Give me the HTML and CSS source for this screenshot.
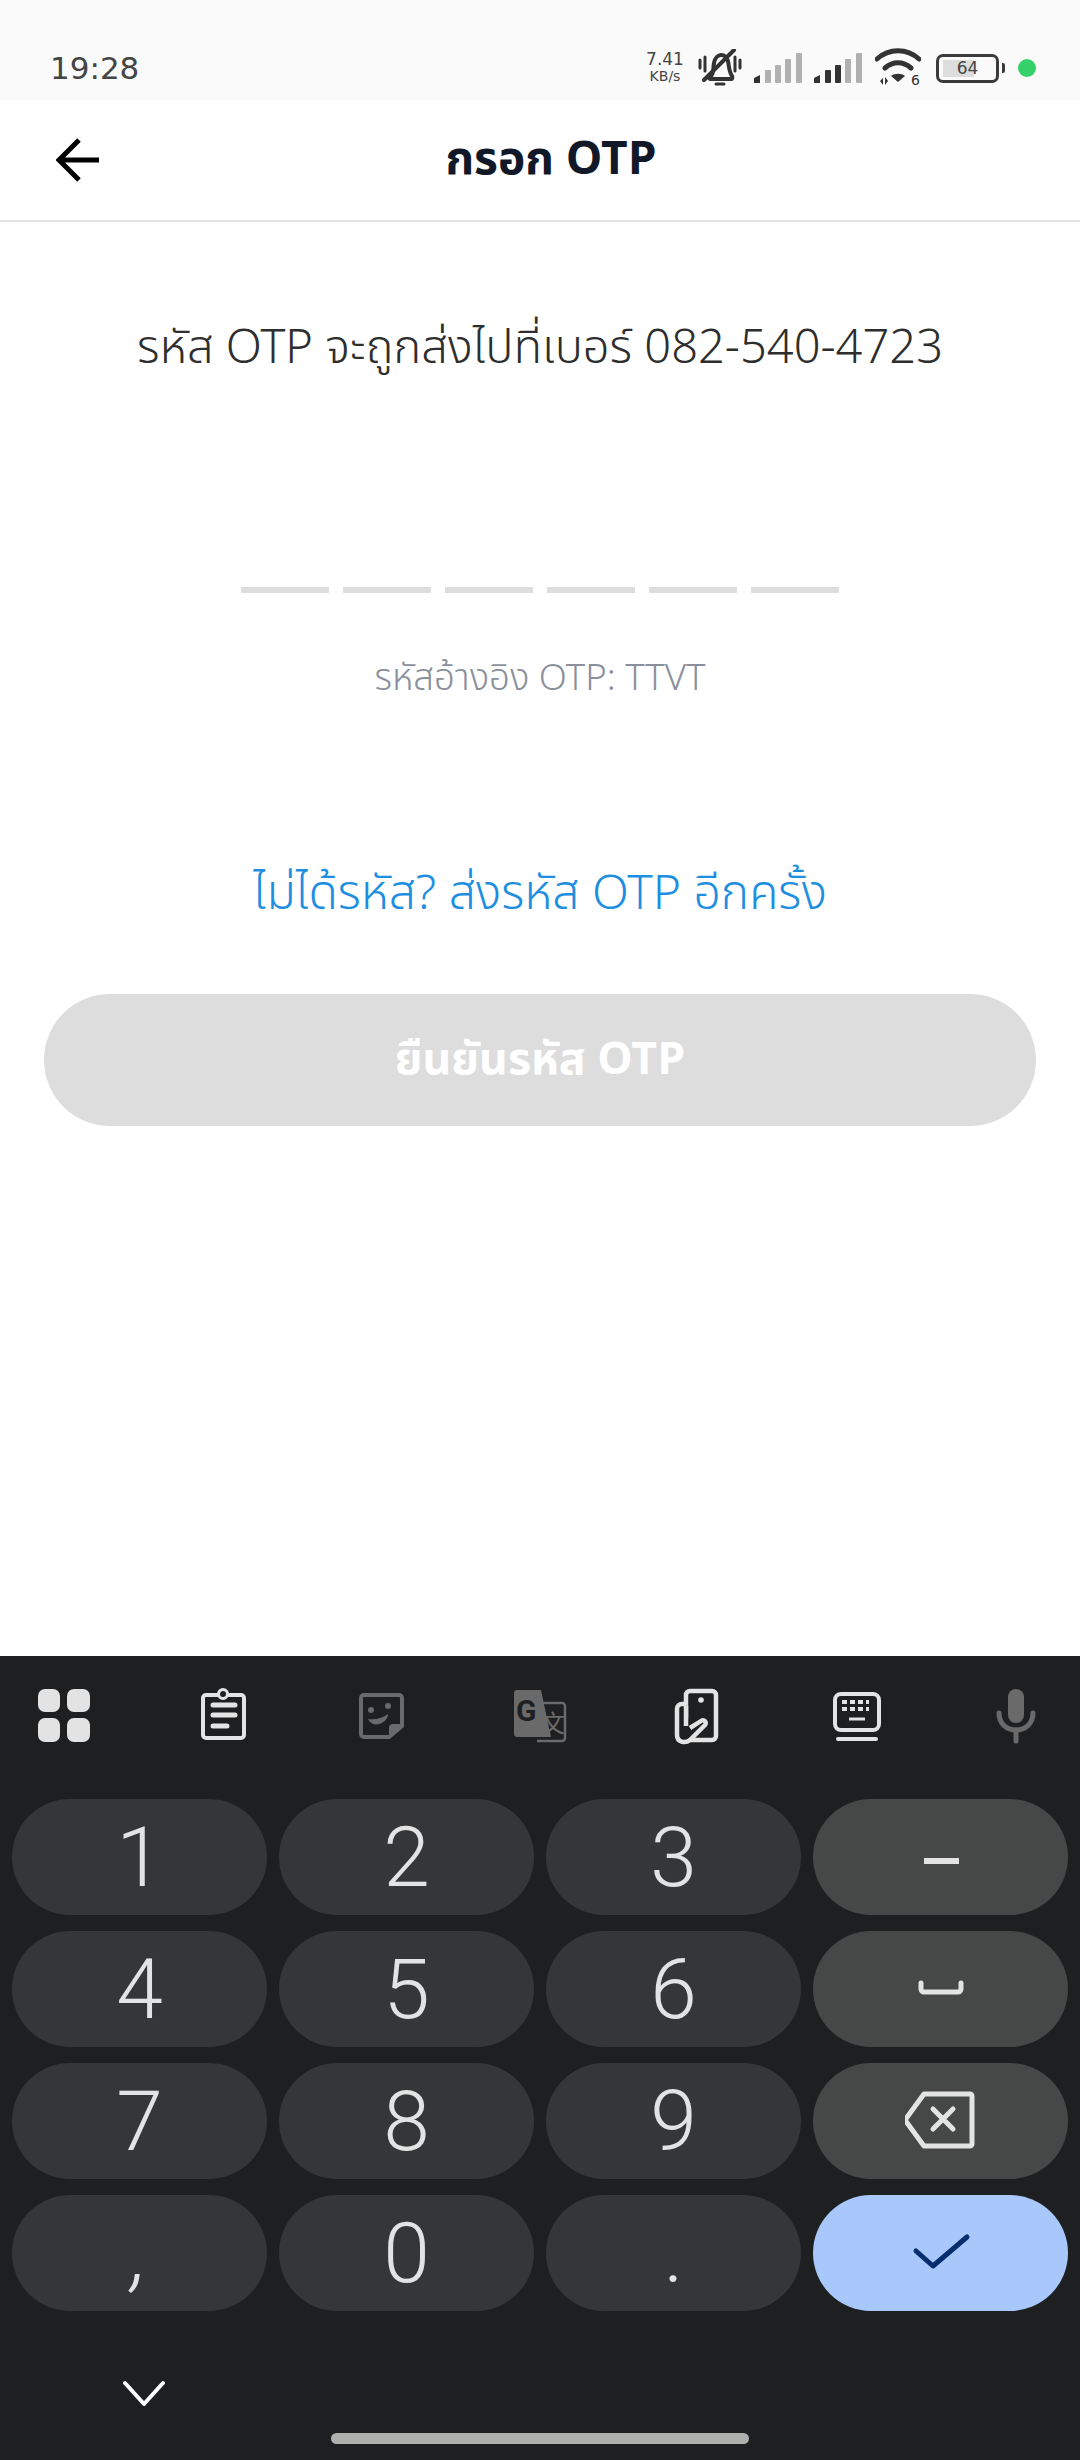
FILE: index.html
```html
<!DOCTYPE html>
<html lang="th">

<head>
  <meta charset="UTF-8">
  <title>กรอก OTP</title>
  <link rel="stylesheet" href="styles.css">
</head>

<body>
  <div class="phone">
    <div class="status-bar">
      <span class="time">19:28</span>
      <div class="status-icons">
        <div class="speed"><span>7.41</span><span class="speed-unit">KB/s</span></div>
        <svg class="st-bell" width="44" height="38" viewBox="0 0 44 38">
          <path d="M13 27c3-3 2-8 3-13 1-5 4-8 7-8s6 2 7 6c1 5 1 11 4 15 1 2 0 3-1 3H12c-1 0-1-2 1-3z" fill="none" stroke="#333" stroke-width="4"/>
          <path d="M18 35h8" stroke="#333" stroke-width="3" stroke-linecap="round"/>
          <path d="M6 31L36 1" stroke="#333" stroke-width="4" stroke-linecap="round"/>
          <path d="M2 11v8M7 8v14M37 8v14M42 11v8" stroke="#333" stroke-width="3" stroke-linecap="round"/>
        </svg>
        <svg class="st-signal" width="48" height="30" viewBox="0 0 48 30">
          <path d="M0 30v-5l6-3v8z" fill="#333"/>
          <rect x="11" y="17" width="6" height="13" rx="1" fill="#b0b0b0"/>
          <rect x="21" y="12" width="6" height="18" rx="1" fill="#b0b0b0"/>
          <rect x="31" y="6" width="6" height="24" rx="1" fill="#b0b0b0"/>
          <rect x="42" y="0" width="6" height="30" rx="1" fill="#b0b0b0"/>
        </svg>
        <svg class="st-signal" width="48" height="30" viewBox="0 0 48 30">
          <path d="M0 30v-5l6-3v8z" fill="#333"/>
          <rect x="11" y="17" width="6" height="13" rx="1" fill="#333"/>
          <rect x="21" y="12" width="6" height="18" rx="1" fill="#333"/>
          <rect x="31" y="6" width="6" height="24" rx="1" fill="#b0b0b0"/>
          <rect x="42" y="0" width="6" height="30" rx="1" fill="#b0b0b0"/>
        </svg>
        <svg class="st-wifi" width="46" height="46" viewBox="0 0 46 46">
          <path d="M2 14C14 3 32 3 44 14M10 23c8-7 18-7 26 0" fill="none" stroke="#333" stroke-width="5" stroke-linecap="round"/>
          <path d="M16 31c4-3 10-3 14 0l-7 6z" fill="#333"/>
          <path d="M5 36l3-3v7zM10 32l3 4-3 4z" fill="#333"/>
          <text class="wifi-six" x="36" y="40">6</text>
        </svg>
        <div class="battery">
          <div class="battery-body"><span class="battery-level"></span><span class="battery-text">64</span></div>
          <span class="battery-cap"></span>
        </div>
        <span class="dot"></span>
      </div>
    </div>

    <header class="app-bar">
      <svg class="back" width="44" height="46" viewBox="0 0 44 46">
        <path d="M43 23H3M23 3L3 23l20 20" fill="none" stroke="#000" stroke-width="5"/>
      </svg>
      <h1 class="title">กรอก OTP</h1>
    </header>

    <main class="content">
      <p class="sent-to">รหัส OTP จะถูกส่งไปที่เบอร์ 082-540-4723</p>
      <div class="otp-row">
        <span></span><span></span><span></span><span></span><span></span><span></span>
      </div>
      <p class="ref">รหัสอ้างอิง OTP: TTVT</p>
      <a class="resend">ไม่ได้รหัส? ส่งรหัส OTP อีกครั้ง</a>
      <button class="confirm">ยืนยันรหัส OTP</button>
    </main>

    <section class="keyboard">
      <div class="kb-tools">
        <svg class="tool" viewBox="0 0 60 60">
          <rect x="4" y="3" width="22" height="23" rx="7" fill="#e3e3e3"/>
          <rect x="33" y="3" width="23" height="23" rx="7" fill="#e3e3e3"/>
          <rect x="4" y="32" width="22" height="24" rx="7" fill="#e3e3e3"/>
          <rect x="33" y="32" width="23" height="24" rx="7" fill="#e3e3e3"/>
        </svg>
        <svg class="tool" viewBox="0 0 60 60">
          <rect x="10" y="9" width="41" height="43" rx="3" fill="none" stroke="#e3e3e3" stroke-width="4"/>
          <circle cx="30" cy="8" r="4.5" fill="#1e1f21" stroke="#e3e3e3" stroke-width="3"/>
          <path d="M20 19h22M20 29h22M20 40h14" stroke="#e3e3e3" stroke-width="5" stroke-linecap="round"/>
        </svg>
        <svg class="tool" viewBox="0 0 60 60">
          <path d="M13 9h35a3 3 0 0 1 3 3v28L38 51H13a3 3 0 0 1-3-3V12a3 3 0 0 1 3-3z" fill="none" stroke="#6a6a6a" stroke-width="4"/>
          <path d="M51 38H42a4 4 0 0 0-4 4v9z" fill="#6a6a6a"/>
          <circle cx="20" cy="24" r="3" fill="#6a6a6a"/>
          <circle cx="37" cy="20" r="3" fill="#6a6a6a"/>
          <path d="M17 33c8 1 15-1 20-5 0 7-9 12-15 10-2-1-4-3-5-5z" fill="#6a6a6a"/>
        </svg>
        <svg class="tool" viewBox="0 0 60 60">
          <path d="M32 17h20a3 3 0 0 1 3 3v32a3 3 0 0 1-3 3H27" fill="none" stroke="#6a6a6a" stroke-width="2.5"/>
          <path d="M7 4h24l10 47H7a3 3 0 0 1-3-3V7a3 3 0 0 1 3-3z" fill="#6a6a6a"/>
          <text class="tr-g" x="6" y="35">G</text>
          <text class="tr-zh" x="31" y="46">文</text>
        </svg>
        <svg class="tool" viewBox="0 0 60 60">
          <path d="M17 34V9a4 4 0 0 1 4-4h22a4 4 0 0 1 4 4v41a4 4 0 0 1-4 4H21" fill="none" stroke="#e3e3e3" stroke-width="4.5"/>
          <circle cx="32" cy="14" r="2.8" fill="#e3e3e3"/>
          <path d="M17 18h-4a5 5 0 0 0-5 5v26c0 7 8 9 13 5l15-15c2-3-1-6-4-4l-11 7" fill="#1e1f21" stroke="#e3e3e3" stroke-width="4.5" stroke-linejoin="round"/>
          <path d="M17 20v20" stroke="#e3e3e3" stroke-width="4.5"/>
        </svg>
        <svg class="tool" viewBox="0 0 60 60">
          <rect x="8" y="8" width="44" height="36" rx="6" fill="none" stroke="#e3e3e3" stroke-width="4"/>
          <path d="M15 16h27M15 23h27" stroke="#e3e3e3" stroke-width="4" stroke-dasharray="5 3" fill="none"/>
          <path d="M22 33h16" stroke="#e3e3e3" stroke-width="3"/>
          <path d="M11 53h38" stroke="#e3e3e3" stroke-width="4" stroke-linecap="round"/>
        </svg>
        <svg class="tool" viewBox="0 0 60 60">
          <rect x="22" y="3" width="16" height="34" rx="8" fill="#6a6a6a"/>
          <path d="M13 27c0 11 8 17 17 17s17-6 17-17" fill="none" stroke="#6a6a6a" stroke-width="5" stroke-linecap="round"/>
          <path d="M30 44v11" stroke="#6a6a6a" stroke-width="5" stroke-linecap="round"/>
        </svg>
      </div>

      <div class="kb-keys">
        <div class="key">1</div>
        <div class="key">2</div>
        <div class="key">3</div>
        <div class="key key-fn">
          <svg width="60" height="60" viewBox="0 0 60 60"><path d="M13 34h35" stroke="#e3e3e3" stroke-width="6"/></svg>
        </div>
        <div class="key">4</div>
        <div class="key">5</div>
        <div class="key">6</div>
        <div class="key key-fn">
          <svg width="60" height="60" viewBox="0 0 60 60"><path d="M10 24v6a3 3 0 0 0 3 3h34a3 3 0 0 0 3-3v-6" fill="none" stroke="#e3e3e3" stroke-width="5" stroke-linecap="round"/></svg>
        </div>
        <div class="key">7</div>
        <div class="key">8</div>
        <div class="key">9</div>
        <div class="key key-fn">
          <svg width="72" height="60" viewBox="0 0 72 60">
            <path d="M19 3h46a2 2 0 0 1 2 2v48a2 2 0 0 1-2 2H19L0 29z" fill="none" stroke="#e3e3e3" stroke-width="5" stroke-linejoin="round"/>
            <path d="M28 18l20 20M48 18L28 38" stroke="#e3e3e3" stroke-width="5" stroke-linecap="round"/>
          </svg>
        </div>
        <div class="key key-comma">,</div>
        <div class="key">0</div>
        <div class="key">.</div>
        <div class="key key-enter">
          <svg width="60" height="44" viewBox="0 0 60 44"><path d="M5 20l17 15L56 6" fill="none" stroke="#062e6f" stroke-width="5" stroke-linecap="round" stroke-linejoin="round"/></svg>
        </div>
      </div>

      <div class="kb-bottom">
        <svg class="hide-kb" width="44" height="28" viewBox="0 0 44 28"><path d="M3 3l19 21L41 3" fill="none" stroke="#fff" stroke-width="4" stroke-linecap="round" stroke-linejoin="round"/></svg>
        <span class="home-bar"></span>
      </div>
    </section>
  </div>
</body>

</html>
```

FILE: styles.css
```css
* {
  box-sizing: border-box;
}

body {
  margin: 0;
  background: #fff;
  font-family: "Noto Sans Thai", "Noto Sans", "Liberation Sans", sans-serif;
}

.phone {
  width: 1080px;
  height: 2460px;
  display: flex;
  flex-direction: column;
  overflow: hidden;
}

/* status bar */

.status-bar {
  height: 100px;
  flex: none;
  background: #fafafa;
  display: flex;
  align-items: flex-end;
  justify-content: space-between;
  padding: 0 44px 14px 50px;
}

.time {
  font-family: "DejaVu Sans", sans-serif;
  font-size: 31px;
  line-height: 36px;
  color: #444;
}

.status-icons {
  display: flex;
  align-items: center;
  margin-bottom: -5px;
}

.speed {
  display: flex;
  flex-direction: column;
  align-items: center;
  width: 42px;
  font-family: "DejaVu Sans", sans-serif;
  font-size: 17px;
  line-height: 17px;
  color: #444;
  margin-right: 12px;
}

.speed-unit {
  font-size: 14px;
}

.st-signal {
  margin-left: 12px;
}

.st-signal:first-of-type {
  margin-left: 14px;
}

.st-wifi {
  margin-left: 13px;
}

.wifi-six {
  font-family: "DejaVu Sans", sans-serif;
  font-size: 14px;
  fill: #333;
}

.battery {
  display: flex;
  align-items: center;
  margin-left: 15px;
}

.battery-body {
  width: 63px;
  height: 29px;
  border: 3px solid #3a3a3a;
  border-radius: 7px;
  display: flex;
  align-items: center;
  justify-content: center;
  position: relative;
}

.battery-level {
  position: absolute;
  left: 4px;
  top: 3px;
  bottom: 3px;
  width: 31px;
  background: #ddd;
}

.battery-text {
  position: relative;
  font-family: "DejaVu Sans", sans-serif;
  font-size: 17px;
  color: #444;
}

.battery-cap {
  width: 3px;
  height: 10px;
  margin-left: 3px;
  background: #3a3a3a;
  border-radius: 0 2px 2px 0;
}

.dot {
  width: 18px;
  height: 18px;
  margin-left: 13px;
  border-radius: 50%;
  background: #34d168;
}

/* header */

.app-bar {
  height: 122px;
  flex: none;
  border-bottom: 2px solid #e2e2e2;
  display: flex;
  align-items: center;
  justify-content: center;
  position: relative;
}

.back {
  position: absolute;
  left: 56px;
  top: 37px;
}

.title {
  margin: 0 0 0 22px;
  font-size: 46px;
  font-weight: 700;
  color: #111827;
}

/* otp form */

.content {
  flex: 1;
  display: flex;
  flex-direction: column;
  align-items: center;
  padding: 0 44px;
}

.sent-to {
  margin: 95px 0 0;
  font-size: 47px;
  font-weight: 350;
  line-height: 64px;
  color: #2e2e2e;
}

.otp-row {
  display: flex;
  gap: 14px;
  margin-top: 206px;
}

.otp-row span {
  width: 88px;
  height: 6px;
  background: #ddd;
}

.ref {
  margin: 61px 0 0;
  font-size: 36.6px;
  font-weight: 350;
  line-height: 50px;
  color: #8a8f9c;
}

.resend {
  margin-top: 159px;
  font-size: 48px;
  font-weight: 350;
  line-height: 64px;
  color: #1e8fe0;
}

.confirm {
  width: 992px;
  height: 132px;
  margin-top: 67px;
  border: 0;
  border-radius: 66px;
  background: #ddd;
  color: #fff;
  font-family: inherit;
  font-size: 44.6px;
  font-weight: 700;
}

/* keyboard */

.keyboard {
  height: 804px;
  flex: none;
  background: #1e1f21;
}

.kb-tools {
  height: 143px;
  padding: 30px 34px 0;
  display: flex;
  justify-content: space-between;
  align-items: flex-start;
}

.tool {
  width: 60px;
  height: 60px;
}

.tr-g {
  font-family: "Roboto", sans-serif;
  font-size: 30px;
  font-weight: 700;
  fill: #1e1f21;
}

.tr-zh {
  font-family: "Noto Sans CJK SC", sans-serif;
  font-size: 24px;
  fill: #6a6a6a;
}

.kb-keys {
  display: grid;
  grid-template-columns: repeat(4, 1fr);
  grid-auto-rows: 116px;
  column-gap: 12px;
  row-gap: 16px;
  padding: 0 12px;
}

.key {
  display: flex;
  align-items: center;
  justify-content: center;
  border-radius: 58px;
  background: #353638;
  color: #e3e3e3;
  font-family: "Roboto", sans-serif;
  font-size: 84px;
  font-weight: 350;
}

.key-comma {
  font-style: italic;
}

.key-fn {
  background: #464847;
}

.key-enter {
  background: #a8c7fa;
}

.kb-bottom {
  position: relative;
  height: 148px;
}

.hide-kb {
  position: absolute;
  left: 122px;
  top: 69px;
}

.home-bar {
  position: absolute;
  left: 331px;
  top: 122px;
  width: 418px;
  height: 11px;
  border-radius: 6px;
  background: #aeb0ae;
}
```
